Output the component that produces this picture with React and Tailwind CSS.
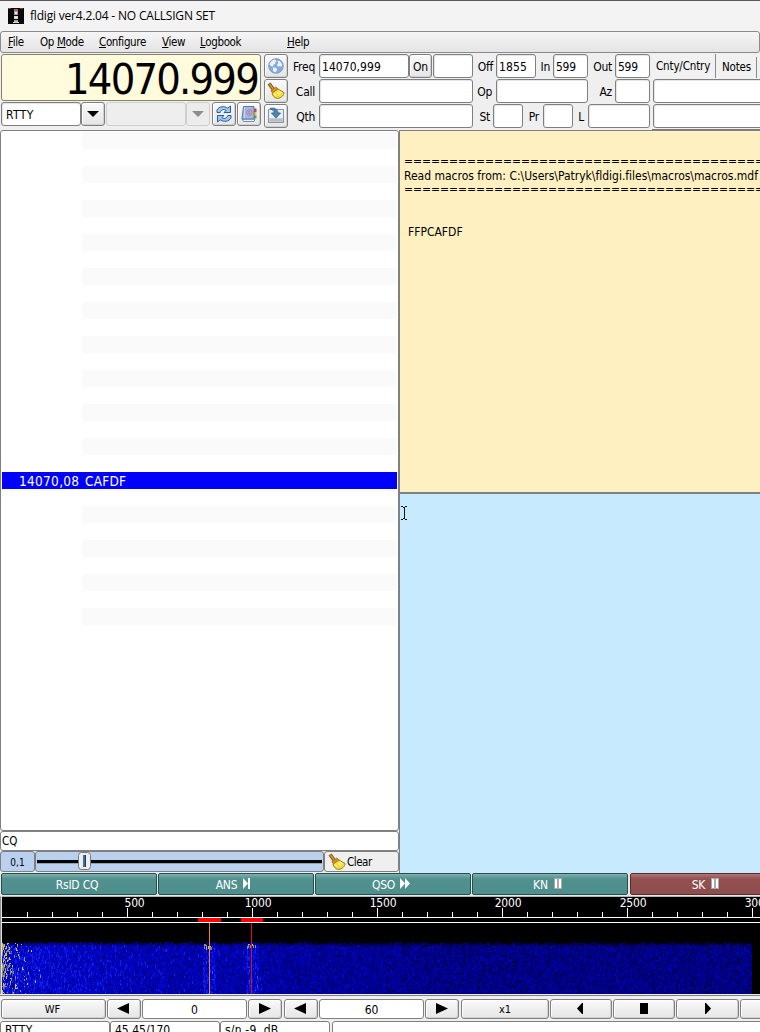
import React from "react";

const box = "shrink-0 rounded-[3px] border border-[#7f7f7f] ";
const inputBg = "bg-white shadow-[inset_1px_1px_1px_#e4e4e4] ";
const btnBg = "bg-gradient-to-b from-[#fafafa] via-[#efefef] to-[#e6e6e6] ";

function Field({ className = "", children }) {
  return (
    <div className={box + inputBg + "flex h-6 items-center overflow-hidden whitespace-pre pl-[2px] pt-px " + className}>
      {children}
    </div>
  );
}

function Button({ className = "", children }) {
  return (
    <div className={box + btnBg + "flex items-center justify-center whitespace-pre shadow-[inset_-1px_-1px_0_#d2d2d2,inset_1px_1px_0_#ffffff] " + className}>
      {children}
    </div>
  );
}

function Label({ className = "", children }) {
  return <div className={"shrink-0 whitespace-nowrap pt-px text-right text-[12px] tracking-[-0.25px] " + className}>{children}</div>;
}

function Tower() {
  return (
    <svg width="16" height="16" viewBox="0 0 16 16" shapeRendering="crispEdges" className="shrink-0">
      <rect width="16" height="16" fill="#080808" />
      <path d="M0 0h3v1H0zM12 0h3v1h-3z" fill="#555" />
      <rect x="6" y="1" width="4" height="2" fill="#c45a55" />
      <rect x="6" y="3" width="4" height="4" fill="#999" />
      <rect x="7" y="4" width="2" height="2" fill="#eee" />
      <rect x="6" y="8" width="4" height="3" fill="#ddd" />
      <rect x="6" y="12" width="4" height="2" fill="#aaa" />
      <rect x="5" y="14" width="6" height="1" fill="#ddd" />
    </svg>
  );
}

function Globe() {
  return (
    <svg width="16" height="16" viewBox="0 0 16 16" className="shrink-0">
      <circle cx="8" cy="8" r="7.300" fill="#86abdb" stroke="#7d98c0" />
      <path d="M1.500 6.500C2.500 3.500 4.500 1.800 7 1.500L8.500 3 7 4.500 7.500 6 5.500 6.500 5 8.500 3 8zM9.500 2.500l2.500.7 2.300 3.300-.5 2-2.300-.5-1.300.8L9 7l1.200-2zM5 9.500l3 .3 1.200 1.700L7.500 14.500 5 13z" fill="#edf3f9" />
    </svg>
  );
}

function Broom() {
  return (
    <svg width="18" height="18" viewBox="0 0 18 18" className="shrink-0">
      <path d="M2 1.500 6 7" stroke="#80500f" strokeWidth="3.600" />
      <path d="M2.300 2 6 6.800" stroke="#d8a02c" strokeWidth="1.500" />
      <path d="m3.800 9 5-4 2.500 2.300-5.100 4z" fill="#dd8c28" stroke="#8a5a14" strokeWidth=".7" />
      <path d="m5 11 6-4 6 3.500c.2 2.500-2.700 5.500-6.500 6C7.500 16 5.300 13.500 5 11z" fill="#f1dc35" stroke="#9c7c10" />
      <path d="m7.500 11.500 1.500 2.500M10 10l2.500 3M12 9l2.500 2" stroke="#fff8a8" strokeWidth="1.200" />
    </svg>
  );
}

function SaveIcon() {
  return (
    <svg width="18" height="18" viewBox="0 0 18 18" className="shrink-0">
      <path d="M1.500 2.500h15v13h-15z" fill="#e9edf0" stroke="#7f95a5" />
      <path d="M2 11h14v4H2z" fill="#c9cccf" />
      <path d="M3.500 13h11" stroke="#8b9196" strokeDasharray="1 1" />
      <path d="M3 1.500c4-1 7.500 0 8 4.500h2.500L9 11 4.500 6h2.800c0-2-1.600-3.500-4.300-4.500z" fill="#4a88b0" stroke="#1f5c8c" strokeWidth=".8" />
    </svg>
  );
}

function Refresh() {
  return (
    <svg width="18" height="18" viewBox="0 0 18 18" className="shrink-0">
      <path d="M2 7.500V5C4 1.500 9 .5 12.800 3.200L15.500 1v6.500H9l2.200-2.200C9 3.800 6 4.500 5.200 7.500z" fill="#a4c8ec" stroke="#2a5b9c" strokeWidth="1" />
      <path d="M16 10.500V13c-2 3.500-7 4.500-10.800 1.800L2.500 17v-6.500H9l-2.200 2.200c2.200 1.500 5.200.8 6-2.200z" fill="#a4c8ec" stroke="#2a5b9c" strokeWidth="1" />
    </svg>
  );
}

function Book() {
  return (
    <svg width="18" height="18" viewBox="0 0 18 18" className="shrink-0">
      <path d="M14 3.500h2.500V7H14z" fill="#e03a2a" />
      <path d="M14 7h2.500v3.500H14z" fill="#f0c020" />
      <path d="M14 10.500h2.500v3H14z" fill="#4aa83a" />
      <path d="m2 14 1.500 2.500H14L15 14z" fill="#eef2f8" stroke="#5571a0" strokeWidth=".8" />
      <path d="M3.500 1.500H14v12.500H2z" fill="#a3b9de" stroke="#5b76ac" />
      <path d="M4.500 2v11" stroke="#c4d4ee" />
      <circle cx="9.300" cy="7.500" r="2.800" fill="none" stroke="#b8709c" strokeWidth=".9" />
      <circle cx="9.300" cy="7.500" r="1" fill="none" stroke="#c8749c" strokeWidth=".9" />
    </svg>
  );
}

function Down({ color }) {
  return (
    <svg width="12" height="6" viewBox="0 0 12 6">
      <path d="M0 0h12L6 6z" fill={color} />
    </svg>
  );
}

const ARROWS = {
  left: "M12 0v11L0 5.500z",
  right: "M0 0v11l12-5.500z",
  smallLeft: "M9 0v11h-1L3 5.500 8 0z",
  smallRight: "M3 0v11h1l5-5.500L4 0z",
  stop: "M2 0h8v11H2z",
};

function Arrow({ kind }) {
  return (
    <svg width="12" height="11" viewBox="0 0 12 11" className="-mt-[2px]">
      <path d={ARROWS[kind]} fill="#000" />
    </svg>
  );
}

const MENU = [
  ["F", "ile", "", "w-8"],
  ["M", "ode", "Op ", "w-[59px]"],
  ["C", "onfigure", "", "w-[63px]"],
  ["V", "iew", "", "w-[38px]"],
  ["L", "ogbook", "", "w-[87px]"],
  ["H", "elp", "", ""],
];

function MenuBar() {
  return (
    <div className="flex h-[22px] shrink-0 items-center rounded-[3px] border border-[#8a8a8a] bg-gradient-to-b from-[#f6f6f6] to-[#e4e4e4] pl-[7px] pt-px text-[11.5px] tracking-[-0.35px]">
      {MENU.map(([key, rest, pre, w]) => (
        <div key={key} className={"shrink-0 whitespace-pre " + w}>
          {pre}
          <span className="underline underline-offset-1">{key}</span>
          {rest}
        </div>
      ))}
    </div>
  );
}

function Controls() {
  return (
    <div className="flex h-[77px] shrink-0 pt-px">
      <div className="ml-px flex w-[263px] shrink-0 flex-col">
        <div className="flex h-[47px] w-[260px] items-center justify-end rounded-[3px] border border-[#84826e] bg-[#fffbdc] pr-[2px] pt-[3px] text-[43px] leading-none tracking-[-1.800px]">
          14070.999
        </div>
        <div className="mt-px flex">
          <Field className="w-20 pl-[4px] text-[12px] tracking-[0.4px]">RTTY</Field>
          <Button className="h-6 w-6"><Down color="#000" /></Button>
          <div className="ml-px h-6 w-20 shrink-0 rounded-[3px] border border-[#cfcfcf] bg-[#eeeeee]" />
          <div className="flex h-6 w-6 shrink-0 items-center justify-center rounded-[3px] border border-[#cfcfcf] bg-[#ececec]"><Down color="#8e8e8e" /></div>
          <Button className="ml-[2px] h-6 w-6"><Refresh /></Button>
          <Button className="ml-px h-6 w-6"><Book /></Button>
        </div>
      </div>
      <div className="flex w-6 shrink-0 flex-col gap-px">
        <Button className="h-6 w-6"><Globe /></Button>
        <Button className="h-6 w-6"><Broom /></Button>
        <Button className="h-6 w-6"><SaveIcon /></Button>
      </div>
      <div className="flex w-[364px] shrink-0 flex-col gap-px text-[12px] tracking-[-0.25px]">
        <div className="flex items-center">
          <Label className="mr-[4px] w-[27px]">Freq</Label>
          <Field className="w-[90px] tracking-[0.05px]">14070,999</Field>
          <Button className="h-6 w-[23px] pt-px">On</Button>
          <Field className="ml-px w-10" />
          <Label className="mr-[3px] w-5">Off</Label>
          <Field className="w-10 tracking-[0.1px]">1855</Field>
          <Label className="mr-[3px] w-[14px]">In</Label>
          <Field className="w-[35px]">599</Field>
          <Label className="mr-[3px] w-6">Out</Label>
          <Field className="w-[35px]">599</Field>
        </div>
        <div className="flex items-center">
          <Label className="mr-[4px] w-[27px]">Call</Label>
          <Field className="w-[154px]" />
          <Label className="mr-[4px] w-[19px]">Op</Label>
          <Field className="w-[92px]" />
          <Label className="mr-[3px] w-6">Az</Label>
          <Field className="w-[35px]" />
        </div>
        <div className="flex items-center">
          <Label className="mr-[4px] w-[27px]">Qth</Label>
          <Field className="w-[154px]" />
          <Label className="mr-[3px] w-[17px]">St</Label>
          <Field className="w-[30px]" />
          <Label className="mr-[4px] w-4">Pr</Label>
          <Field className="w-[30px]" />
          <Label className="mr-[4px] w-[11px]">L</Label>
          <Field className="w-[62px]" />
        </div>
      </div>
      <div className="flex w-[109px] shrink-0 flex-col gap-px border-b border-[#777] bg-[#f1f1f1] pl-px">
        <div className="flex h-6 items-center text-[11.5px]">
          <div className="flex h-6 w-[63px] shrink-0 items-center whitespace-nowrap border-r border-[#8a8a8a] pl-[3px] pt-[2px] tracking-[-0.15px]">Cnty/Cntry</div>
          <div className="mt-[2px] flex h-[21px] w-[41px] shrink-0 items-center border-r border-[#8a8a8a] pl-[6px] pt-px tracking-[-0.2px]">Notes</div>
        </div>
        <Field className="w-[130px]" />
        <Field className="w-[130px]" />
      </div>
    </div>
  );
}

const ROWS = Array.from({ length: 41 }, (_, i) => i);

function Browser() {
  return (
    <div className="flex w-[399px] shrink-0 flex-col">
      <div className="h-[701px] shrink-0 overflow-hidden rounded-[3px] border border-[#808080] bg-white pl-px pr-[1px] pt-px">
        {ROWS.map((i) =>
          i === 20 ? (
            <div key={i} className="flex h-[17px] items-center bg-[#0000ff] pl-[17px] pt-[2px] text-[13.500px] text-white">
              <span className="w-[66px] tracking-[0.3px]">14070,08</span>
              <span className="tracking-[0.2px]">CAFDF</span>
            </div>
          ) : (
            <div key={i} className="flex h-[17px] pl-20">
              <div className={i % 2 === 0 && i < 29 ? "flex-1 bg-[#fafafa]" : "flex-1"} />
            </div>
          )
        )}
      </div>
      <div className="flex h-[20px] shrink-0 items-center rounded-[3px] border border-[#808080] bg-white pl-[1px] pt-px text-[11.5px]">CQ</div>
      <div className="flex h-[22px] shrink-0 pb-px">
        <div className={box + "flex h-[21px] w-[35px] items-center justify-center bg-[#b9d1ee] pt-[2px] text-[10px]"}>0,1</div>
        <div className={box + "flex h-[21px] w-[289px] items-center bg-[#b9d1ee]"}>
          <svg width="287" height="19" viewBox="0 0 287 19">
            <path d="M1 9.500h285" stroke="#000" strokeWidth="3" />
            <path d="M1 11.500h285" stroke="#8fa0b8" />
            <rect x="42.500" y=".5" width="12" height="17" rx="3" fill="#eee" stroke="#777" />
            <rect x="47" y="3" width="3" height="12" fill="#3a6ea5" />
            <rect x="49" y="3" width="1" height="12" fill="#1c3c60" />
          </svg>
        </div>
        <div className={box + "flex h-[21px] w-[75px] items-center gap-px bg-[#efefef] pl-[3px] text-[11.5px] tracking-[-0.45px]"}>
          <Broom />
          <span className="pt-[2px]">Clear</span>
        </div>
      </div>
    </div>
  );
}

function Messages() {
  const rule = "=".repeat(40);
  return (
    <div className="flex flex-1 flex-col overflow-hidden">
      <div className="h-[362px] shrink-0 overflow-hidden whitespace-pre border-l border-t border-[#808080] bg-[#fff0c1] pl-[4px] pt-[24px] text-[12px] leading-[14px]">
        <div className="-mt-px mb-px tracking-[-0.05px]">{rule}</div>
        <div className="tracking-[-0.01px]">Read macros from: C:\Users\Patryk\fldigi.files\macros\macros.mdf</div>
        <div className="-mt-px mb-px tracking-[-0.05px]">{rule}</div>
        <div className="h-7" />
        <div className="pl-[4px]">FFPCAFDF</div>
      </div>
      <div className="flex-1 border-l border-t-2 border-[#808080] bg-[#c8eaff] pl-px pt-[12px]">
        <svg width="7" height="14" viewBox="0 0 7 14" shapeRendering="crispEdges">
          <path d="M0 0h2v1H0zM4 0h2v1H4zM0 13h2v1H0zM4 13h2v1H4zM2 1h2v1H2zM2 12h2v1H2zM3 1h1v12H3z" fill="#111" />
        </svg>
      </div>
    </div>
  );
}

const MACRO_MARKS = {
  none: null,
  next: <path d="M1 0v11l5-5.500zM6 0h2v11H6z" fill="#fff" />,
  ff: <path d="M0 0v11l5-5.500zM5 0v11l5-5.500z" fill="#fff" />,
  pause: (
    <g shapeRendering="crispEdges">
      <path d="M1 0h8v11H1z" fill="#aaa" />
      <path d="M2 1h2v9H2zM6 1h2v9H6z" fill="#fff" />
    </g>
  ),
};

const MACROS = [
  ["RsID CQ", "none"],
  ["ANS", "next"],
  ["QSO", "ff"],
  ["KN", "pause"],
  ["SK", "pause"],
];

function MacroBar() {
  return (
    <div className="flex h-[23px] shrink-0 gap-px overflow-hidden bg-[#e8e8e8] pl-px">
      {MACROS.map(([name, mark]) => (
        <div
          key={name}
          className={
            "flex h-[22px] w-[156px] shrink-0 items-center justify-center gap-[5px] rounded-[2px] border pr-[4px] pt-px text-[12px] tracking-[-0.2px] text-white " +
            (name === "SK"
              ? "ml-px border-[#5c2b2b] bg-gradient-to-b from-[#b17474] via-[#935050] via-25% to-[#8d4e4e]"
              : "border-[#254f4f] bg-gradient-to-b from-[#7fb0ae] via-[#50908e] via-25% to-[#4e8e8c]")
          }
        >
          {name}
          {mark !== "none" && (
            <svg width="10" height="11" viewBox="0 0 10 11" className="-mt-[3px]">
              {MACRO_MARKS[mark]}
            </svg>
          )}
        </div>
      ))}
    </div>
  );
}

const PALETTE = ["#000020", "#000046", "#00006c", "#00008e", "#0000ae", "#0006d0", "#0a20ee", "#4458b8", "#8c8c78", "#cfc050"];

function buildNoise() {
  let seed = 12345;
  const rand = () => {
    seed = (seed * 1664525 + 1013904223) % 4294967296;
    return seed / 4294967296;
  };
  const paths = PALETTE.map(() => []);
  for (let x = 0; x < 750; x++) {
    let y = Math.floor(rand() * 3);
    const base = x < 130 ? 5.6 - x / 150 : x < 260 ? 4.7 - (x - 130) / 260 : Math.max(3.150, 4.100 - (x - 260) / 220);
    const d = Math.min(Math.abs(x - 207), Math.abs(x - 250));
    while (y < 52) {
      const h = 1 + Math.floor(rand() * 3);
      let v = base + (rand() + rand() - 1) * 2;
      if (d < 7) v += 0.9;
      if (d === 3 || d === 5) v += 0.7;
      if (y < 3) v -= 1.600;
      v = Math.min(6.5, v);
      if (x < 40 && rand() < 0.6 * Math.exp(-x / 11)) v = 7.500 + rand() * 2.500;
      if (d < 6 && y > 1 && y < 6 && rand() < 0.45) v = 8 + rand() * 2;
      if ((d === 3 || d === 5) && rand() < 0.08) v = 7;
      const level = Math.max(0, Math.min(9, Math.floor(v)));
      const hh = Math.min(h, 52 - y);
      paths[level].push("M" + x + " " + y + "h1v" + hh + "h-1z");
      y += h;
    }
  }
  return paths.map((p) => p.join(""));
}

const NOISE = buildNoise();
const TICKS = Array.from({ length: 30 }, (_, i) => i + 1);
const SCALE = [["500", 134.500], ["1000", 258], ["1500", 383], ["2000", 508], ["2500", 633], ["3000", 758]];

function Waterfall() {
  return (
    <div className="h-[100px] shrink-0 overflow-hidden border-b border-[#808080] bg-[#efefef]">
      <svg width="760" height="99" viewBox="0 0 760 99" shapeRendering="crispEdges">
        <rect width="760" height="98" fill="#000" />
        <rect width="1" height="98" fill="#909090" />
        <rect width="760" height="1" fill="#b4b4b4" />
        <rect x="1" width="1" height="98" fill="#ddd" />
        {SCALE.map(([s, x]) => (
          <text key={s} x={x} y="11" textAnchor="middle" fontSize="12" letterSpacing="-0.2" fill="#fff">{s}</text>
        ))}
        {TICKS.map((i) => (
          <rect key={i} x={2 + i * 25} y={i % 5 === 0 ? 12 : 16} width="1" height={i % 5 === 0 ? 9 : 5} fill="#fff" />
        ))}
        <rect x="2" y="21" width="758" height="1" fill="#fff" />
        <rect x="2" y="26" width="758" height="1" fill="#fff" />
        <rect x="198" y="22" width="23" height="4" fill="#f00" />
        <rect x="241" y="22" width="22" height="4" fill="#f00" />
        <g transform="translate(2 46)">
          {NOISE.map((d, i) => (
            <path key={i} d={d} fill={PALETTE[i]} />
          ))}
        </g>
        <rect x="209" y="27" width="1" height="71" fill="#f08228" />
        <rect x="251" y="27" width="1" height="71" fill="#e01010" />
      </svg>
    </div>
  );
}

function Transport() {
  const b = "h-5 text-[11px] ";
  const n = box + "flex h-5 items-center justify-center bg-white pt-px text-[12px] tracking-[-0.1px] ";
  return (
    <div className="flex h-[25px] shrink-0 gap-px overflow-hidden pl-px pt-[3px]">
      <Button className={b + "w-[105px] pr-[2px]"}>WF</Button>
      <Button className={b + "w-[34px] pr-[3px]"}><Arrow kind="left" /></Button>
      <div className={n + "w-[105px]"}>0</div>
      <Button className={b + "w-[34px]"}><Arrow kind="right" /></Button>
      <Button className={b + "ml-px w-[34px] pr-[3px]"}><Arrow kind="left" /></Button>
      <div className={n + "w-[105px]"}>60</div>
      <Button className={b + "w-[34px]"}><Arrow kind="right" /></Button>
      <Button className={b + "ml-px w-[88px]"}>x1</Button>
      <Button className={b + "w-[62px] pr-[2px]"}><Arrow kind="smallLeft" /></Button>
      <Button className={b + "w-[62px]"}><Arrow kind="stop" /></Button>
      <Button className={b + "w-[63px]"}><Arrow kind="smallRight" /></Button>
      <Button className={b + "w-[60px]"} />
    </div>
  );
}

function StatusBar() {
  const c = box + "h-6 whitespace-pre bg-white pl-[4px] text-[12px] leading-[17px] ";
  return (
    <div className="flex h-[11px] shrink-0 overflow-hidden">
      <div className={c + "w-[110px] tracking-[0.4px]"}>RTTY</div>
      <div className={c + "w-[110px]"}>45.45/170</div>
      <div className={c + "w-[110px] tracking-[0.2px]"}>s/n -9  dB</div>
      <div className={c + "ml-[2px] w-[440px]"} />
    </div>
  );
}

export default function App() {
  return (
    <div className="flex h-[1032px] w-[760px] flex-col overflow-hidden bg-[#efefef] font-['DejaVu_Sans_Condensed','DejaVu_Sans',sans-serif] leading-none text-black [font-stretch:condensed]">
      <div className="flex h-[31px] shrink-0 items-center gap-[6px] border-t border-[#55585c] bg-[#f3f3f3] pl-2 font-['Open_Sans','Noto_Sans',sans-serif] text-[12px] tracking-[-0.19px] [font-stretch:normal]">
        <Tower />
        <span>fldigi ver4.2.04 - NO CALLSIGN SET</span>
      </div>
      <MenuBar />
      <Controls />
      <div className="flex h-[743px] shrink-0">
        <Browser />
        <Messages />
      </div>
      <MacroBar />
      <Waterfall />
      <Transport />
      <StatusBar />
    </div>
  );
}
